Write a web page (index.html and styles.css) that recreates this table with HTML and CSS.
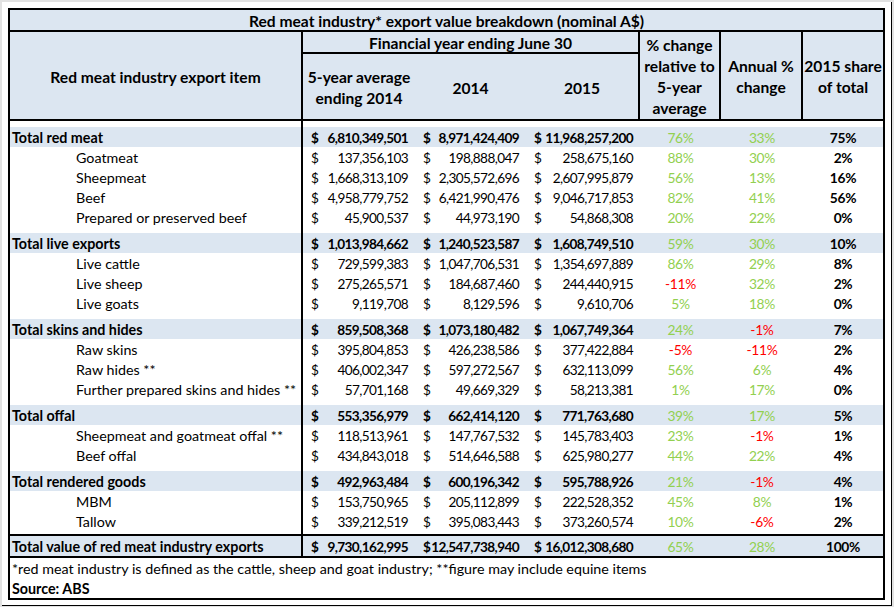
FILE: index.html
```html
<!DOCTYPE html>
<html>
<head>
<meta charset="utf-8">
<link rel="stylesheet" href="styles.css">
</head>
<body>
<div class="frame">
<table class="sheet">
<colgroup>
<col class="c-item"><col class="c-avg"><col class="c-y14"><col class="c-y15"><col class="c-rel"><col class="c-ann"><col class="c-share">
</colgroup>
<thead>
<tr class="h-title"><th colspan="7">Red meat industry* export value breakdown (nominal A$)</th></tr>
<tr class="h-top">
<th rowspan="2" class="h-item vr hb">Red meat industry export item</th>
<th colspan="3" class="h-fin vr">Financial year ending June 30</th>
<th rowspan="2" class="h-multi vr hb">% change<br>relative to<br>5-year<br>average</th>
<th rowspan="2" class="h-multi vr hb">Annual %<br>change</th>
<th rowspan="2" class="h-multi hb">2015 share<br>of total</th>
</tr>
<tr class="h-sub">
<th class="hb h-multi">5-year average<br>ending 2014</th>
<th class="hb">2014</th>
<th class="hb vr">2015</th>
</tr>
</thead>
<tbody>
<tr class="spacer"><td class="vr"></td><td colspan="6"></td></tr>
<tr class="total"><td class="lbl vr">Total red meat</td><td><div class="amt"><span>$</span><span>6,810,349,501</span></div></td><td><div class="amt"><span>$</span><span>8,971,424,409</span></div></td><td><div class="amt"><span>$</span><span>11,968,257,200</span></div></td><td class="pc up">76%</td><td class="pc up">33%</td><td class="sh">75%</td></tr>
<tr><td class="lbl sub vr">Goatmeat</td><td><div class="amt"><span>$</span><span>137,356,103</span></div></td><td><div class="amt"><span>$</span><span>198,888,047</span></div></td><td><div class="amt"><span>$</span><span>258,675,160</span></div></td><td class="pc up">88%</td><td class="pc up">30%</td><td class="sh">2%</td></tr>
<tr><td class="lbl sub vr">Sheepmeat</td><td><div class="amt"><span>$</span><span>1,668,313,109</span></div></td><td><div class="amt"><span>$</span><span>2,305,572,696</span></div></td><td><div class="amt"><span>$</span><span>2,607,995,879</span></div></td><td class="pc up">56%</td><td class="pc up">13%</td><td class="sh">16%</td></tr>
<tr><td class="lbl sub vr">Beef</td><td><div class="amt"><span>$</span><span>4,958,779,752</span></div></td><td><div class="amt"><span>$</span><span>6,421,990,476</span></div></td><td><div class="amt"><span>$</span><span>9,046,717,853</span></div></td><td class="pc up">82%</td><td class="pc up">41%</td><td class="sh">56%</td></tr>
<tr><td class="lbl sub vr">Prepared or preserved beef</td><td><div class="amt"><span>$</span><span>45,900,537</span></div></td><td><div class="amt"><span>$</span><span>44,973,190</span></div></td><td><div class="amt"><span>$</span><span>54,868,308</span></div></td><td class="pc up">20%</td><td class="pc up">22%</td><td class="sh">0%</td></tr>
<tr class="spacer"><td class="vr"></td><td colspan="6"></td></tr>
<tr class="total"><td class="lbl vr">Total live exports</td><td><div class="amt"><span>$</span><span>1,013,984,662</span></div></td><td><div class="amt"><span>$</span><span>1,240,523,587</span></div></td><td><div class="amt"><span>$</span><span>1,608,749,510</span></div></td><td class="pc up">59%</td><td class="pc up">30%</td><td class="sh">10%</td></tr>
<tr><td class="lbl sub vr">Live cattle</td><td><div class="amt"><span>$</span><span>729,599,383</span></div></td><td><div class="amt"><span>$</span><span>1,047,706,531</span></div></td><td><div class="amt"><span>$</span><span>1,354,697,889</span></div></td><td class="pc up">86%</td><td class="pc up">29%</td><td class="sh">8%</td></tr>
<tr><td class="lbl sub vr">Live sheep</td><td><div class="amt"><span>$</span><span>275,265,571</span></div></td><td><div class="amt"><span>$</span><span>184,687,460</span></div></td><td><div class="amt"><span>$</span><span>244,440,915</span></div></td><td class="pc down">-11%</td><td class="pc up">32%</td><td class="sh">2%</td></tr>
<tr><td class="lbl sub vr">Live goats</td><td><div class="amt"><span>$</span><span>9,119,708</span></div></td><td><div class="amt"><span>$</span><span>8,129,596</span></div></td><td><div class="amt"><span>$</span><span>9,610,706</span></div></td><td class="pc up">5%</td><td class="pc up">18%</td><td class="sh">0%</td></tr>
<tr class="spacer"><td class="vr"></td><td colspan="6"></td></tr>
<tr class="total"><td class="lbl vr">Total skins and hides</td><td><div class="amt"><span>$</span><span>859,508,368</span></div></td><td><div class="amt"><span>$</span><span>1,073,180,482</span></div></td><td><div class="amt"><span>$</span><span>1,067,749,364</span></div></td><td class="pc up">24%</td><td class="pc down">-1%</td><td class="sh">7%</td></tr>
<tr><td class="lbl sub vr">Raw skins</td><td><div class="amt"><span>$</span><span>395,804,853</span></div></td><td><div class="amt"><span>$</span><span>426,238,586</span></div></td><td><div class="amt"><span>$</span><span>377,422,884</span></div></td><td class="pc down">-5%</td><td class="pc down">-11%</td><td class="sh">2%</td></tr>
<tr><td class="lbl sub vr">Raw hides **</td><td><div class="amt"><span>$</span><span>406,002,347</span></div></td><td><div class="amt"><span>$</span><span>597,272,567</span></div></td><td><div class="amt"><span>$</span><span>632,113,099</span></div></td><td class="pc up">56%</td><td class="pc up">6%</td><td class="sh">4%</td></tr>
<tr><td class="lbl sub vr">Further prepared skins and hides **</td><td><div class="amt"><span>$</span><span>57,701,168</span></div></td><td><div class="amt"><span>$</span><span>49,669,329</span></div></td><td><div class="amt"><span>$</span><span>58,213,381</span></div></td><td class="pc up">1%</td><td class="pc up">17%</td><td class="sh">0%</td></tr>
<tr class="spacer"><td class="vr"></td><td colspan="6"></td></tr>
<tr class="total"><td class="lbl vr">Total offal</td><td><div class="amt"><span>$</span><span>553,356,979</span></div></td><td><div class="amt"><span>$</span><span>662,414,120</span></div></td><td><div class="amt"><span>$</span><span>771,763,680</span></div></td><td class="pc up">39%</td><td class="pc up">17%</td><td class="sh">5%</td></tr>
<tr><td class="lbl sub vr">Sheepmeat and goatmeat offal **</td><td><div class="amt"><span>$</span><span>118,513,961</span></div></td><td><div class="amt"><span>$</span><span>147,767,532</span></div></td><td><div class="amt"><span>$</span><span>145,783,403</span></div></td><td class="pc up">23%</td><td class="pc down">-1%</td><td class="sh">1%</td></tr>
<tr><td class="lbl sub vr">Beef offal</td><td><div class="amt"><span>$</span><span>434,843,018</span></div></td><td><div class="amt"><span>$</span><span>514,646,588</span></div></td><td><div class="amt"><span>$</span><span>625,980,277</span></div></td><td class="pc up">44%</td><td class="pc up">22%</td><td class="sh">4%</td></tr>
<tr class="spacer"><td class="vr"></td><td colspan="6"></td></tr>
<tr class="total"><td class="lbl vr">Total rendered goods</td><td><div class="amt"><span>$</span><span>492,963,484</span></div></td><td><div class="amt"><span>$</span><span>600,196,342</span></div></td><td><div class="amt"><span>$</span><span>595,788,926</span></div></td><td class="pc up">21%</td><td class="pc down">-1%</td><td class="sh">4%</td></tr>
<tr><td class="lbl sub vr">MBM</td><td><div class="amt"><span>$</span><span>153,750,965</span></div></td><td><div class="amt"><span>$</span><span>205,112,899</span></div></td><td><div class="amt"><span>$</span><span>222,528,352</span></div></td><td class="pc up">45%</td><td class="pc up">8%</td><td class="sh">1%</td></tr>
<tr><td class="lbl sub vr">Tallow</td><td><div class="amt"><span>$</span><span>339,212,519</span></div></td><td><div class="amt"><span>$</span><span>395,083,443</span></div></td><td><div class="amt"><span>$</span><span>373,260,574</span></div></td><td class="pc up">10%</td><td class="pc down">-6%</td><td class="sh">2%</td></tr>
<tr class="spacer thin"><td class="vr"></td><td colspan="6"></td></tr>
<tr class="total grand"><td class="lbl vr">Total value of red meat industry exports</td><td><div class="amt"><span>$</span><span>9,730,162,995</span></div></td><td><div class="amt"><span>$</span><span>12,547,738,940</span></div></td><td><div class="amt"><span>$</span><span>16,012,308,680</span></div></td><td class="pc up">65%</td><td class="pc up">28%</td><td class="sh">100%</td></tr>
</tbody>
<tfoot>
<tr class="note"><td colspan="7">*red meat industry is defined as the cattle, sheep and goat industry; **figure may include equine items</td></tr>
<tr class="source"><td colspan="7">Source: ABS</td></tr>
</tfoot>
</table>
</div>
</body>
</html>
```

FILE: styles.css
```css
* { box-sizing: border-box; }

body {
  margin: 0;
  background: #e2e2e2;
  font-family: Lato, "Liberation Sans", sans-serif;
  font-size: 14.3px;
  color: #000;
}

.frame {
  margin: 2px 0 0 2px;
  width: 890px;
  height: 604px;
  padding: 6px 0 0 6px;
  background: #fff;
  border-right: 1px solid #000;
  border-bottom: 1px solid #000;
}

.sheet {
  border-collapse: separate;
  border-spacing: 0;
  border: 2px solid #000;
  width: 877px;
  table-layout: fixed;
}

.c-item { width: 293px; }
.c-avg { width: 112px; }
.c-y14 { width: 111px; }
.c-y15 { width: 114px; }
.c-rel { width: 81px; }
.c-ann { width: 82px; }
.c-share { width: 80px; }

th, td {
  padding: 2px 0 0 0;
  line-height: 18px;
  height: 20px;
  white-space: nowrap;
  vertical-align: middle;
}

thead th {
  background: #dce6f1;
  font-weight: 700;
  font-size: 15.6px;
  text-align: center;
}

.h-title th {
  border-bottom: 2px solid #000;
  height: 22px;
}

.h-fin {
  border-bottom: 2px solid #000;
  height: 22px;
}

.h-sub th { height: 67px; }

.h-multi { line-height: 21px; }

.vr { border-right: 2px solid #000; }
.hb { border-bottom: 2px solid #000; }

.spacer td { height: 6px; line-height: 0; padding: 0; }
.spacer.thin td { height: 3px; }

.lbl { padding-left: 2px; }
.lbl.sub { padding-left: 66px; }

.amt {
  display: flex;
  justify-content: space-between;
  padding: 0 7px 0 8px;
  font-size: 13.6px;
  letter-spacing: -0.6px;
}

.pc, .sh {
  text-align: center;
  font-size: 13.8px;
  letter-spacing: -0.3px;
}
.up { color: #92d050; }
.down { color: #ff0000; }
.sh { font-weight: 700; }

.total td { background: #dce6f1; font-weight: 700; }
.total td.pc { font-weight: 400; }

.grand td {
  border-top: 2px solid #000;
  border-bottom: 2px solid #000;
  height: 24px;
}

.note td { padding-left: 2px; height: 20px; }
.source td { padding-left: 2px; font-weight: 700; height: 19px; }
```
